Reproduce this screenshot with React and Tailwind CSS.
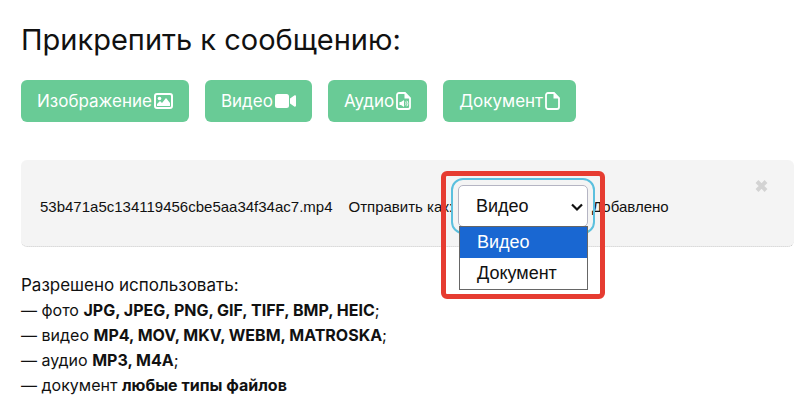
const sendOptions = ["Видео", "Документ"];

const formats = [
  { kind: "фото", list: "JPG, JPEG, PNG, GIF, TIFF, BMP, HEIC", end: ";" },
  { kind: "видео", list: "MP4, MOV, MKV, WEBM, MATROSKA", end: ";" },
  { kind: "аудио", list: "MP3, M4A", end: ";" },
  { kind: "документ", list: "любые типы файлов", end: "" },
];

function ImageIcon() {
  return (
    <svg width="19" height="18" viewBox="0 0 19 18" fill="none" aria-hidden="true">
      <rect x="1" y="2" width="17" height="14" rx="2" stroke="currentColor" strokeWidth="2" />
      <circle cx="5.5" cy="6.5" r="1.8" fill="currentColor" />
      <path d="M3 14v-2l3-3 2 2 4-5 4 5v3z" fill="currentColor" />
    </svg>
  );
}

function VideoIcon() {
  return (
    <svg width="21" height="18" viewBox="0 0 21 18" fill="currentColor" aria-hidden="true">
      <rect x="0" y="2" width="14" height="14" rx="2.5" />
      <path d="M15 6.6l4.3-3c.8-.6 1.7-.2 1.7.8v9.2c0 1-.9 1.4-1.7.8l-4.3-3z" />
    </svg>
  );
}

function FileIcon({ sound }) {
  return (
    <svg width="15" height="18" viewBox="0 0 15 18" fill="none" aria-hidden="true">
      <path
        d="M3 1h6l5 5v9a2 2 0 0 1-2 2H3a2 2 0 0 1-2-2V3a2 2 0 0 1 2-2z"
        stroke="currentColor"
        strokeWidth="1.8"
      />
      <path d="M8.5 1v5.5H14z" fill="currentColor" />
      {sound && (
        <>
          <path d="M3.5 10H5l3-2v7l-3-2H3.5z" fill="currentColor" />
          <path d="M9.2 9.6c1 1 1 2.800 0 3.800M10.800 8.800c1.400 1.600 1.400 3.800 0 5.400" stroke="currentColor" />
        </>
      )}
    </svg>
  );
}

function AttachButton({ label, children }) {
  return (
    <button
      type="button"
      className="flex h-[42px] items-center gap-0.5 rounded-md bg-[#69cb96] px-4 text-[17px] leading-6 text-white"
    >
      {label}
      {children}
    </button>
  );
}

function SendAsSelect() {
  return (
    <div className="relative ml-[5px] h-[42px] w-[130px] shrink-0">
      <select
        id="send-as"
        defaultValue="Видео"
        className="h-full w-full appearance-none rounded-[5px] border border-[#b5b5c3] bg-white pl-[17px] text-[18px] text-[#111] outline-2 outline-offset-[5px] outline-[#5bc0de]"
      >
        {sendOptions.map((option) => (
          <option key={option}>{option}</option>
        ))}
      </select>
      <svg
        className="pointer-events-none absolute right-[5px] top-[18px]"
        width="12"
        height="9"
        viewBox="0 0 12 9"
        fill="none"
        aria-hidden="true"
      >
        <path d="M1 1.5l5 5 5-5" stroke="#111" strokeWidth="2.2" />
      </svg>
      <ul
        role="listbox"
        aria-label="Отправить как"
        className="absolute left-px right-0 top-[41px] z-10 border border-[#666] bg-white text-[18px] leading-[31px] text-[#111]"
      >
        {sendOptions.map((option, i) => (
          <li
            key={option}
            role="option"
            aria-selected={i === 0}
            className={i === 0 ? "bg-[#1967d2] pl-[17px] text-white" : "pl-[17px]"}
          >
            {option}
          </li>
        ))}
      </ul>
      <div className="pointer-events-none absolute -left-[17px] -right-[17px] -top-[14px] z-20 h-32 rounded-md border-5 border-[#e63c31]" />
    </div>
  );
}

export default function App() {
  return (
    <main className="bg-white pl-[21px] pr-[18px] pt-5 font-['Inter',sans-serif] text-[#111]">
      <h1 className="text-[29px] leading-10">Прикрепить к сообщению:</h1>

      <div className="mt-5 flex flex-wrap gap-4">
        <AttachButton label="Изображение">
          <ImageIcon />
        </AttachButton>
        <AttachButton label="Видео">
          <VideoIcon />
        </AttachButton>
        <AttachButton label="Аудио">
          <FileIcon sound />
        </AttachButton>
        <AttachButton label="Документ">
          <FileIcon />
        </AttachButton>
      </div>

      <div className="mt-[38px] flex items-start rounded-md border-b border-dotted border-[#ccc] bg-[#f4f4f4] px-[19px] pb-[19px] font-['Liberation_Sans',sans-serif] text-[15px]">
        <div className="flex items-center pt-[25px]">
          <span className="pt-0.5">53b471a5c134119456cbe5aa34f34ac7.mp4</span>
          <label htmlFor="send-as" className="ml-4 whitespace-nowrap pt-0.5">
            Отправить как:
          </label>
          <SendAsSelect />
          <span className="ml-1 pt-0.5">Добавлено</span>
        </div>
        <button type="button" aria-label="Удалить" className="ml-auto mr-[7px] mt-5 text-[#d3d3d3]">
          <svg width="13" height="12" viewBox="0 0 13 12" fill="none" aria-hidden="true">
            <path d="M2 1.5l9 9M11 1.5l-9 9" stroke="currentColor" strokeWidth="4" />
          </svg>
        </button>
      </div>

      <div className="mt-[26px] leading-[25px]">
        <p className="text-[17px] leading-[25px]">Разрешено использовать:</p>
        <ul className="text-[16px] leading-[25px]">
          {formats.map(({ kind, list, end }) => (
            <li key={kind}>
              — {kind} <b className="font-bold">{list}</b>
              {end}
            </li>
          ))}
        </ul>
      </div>
    </main>
  );
}
